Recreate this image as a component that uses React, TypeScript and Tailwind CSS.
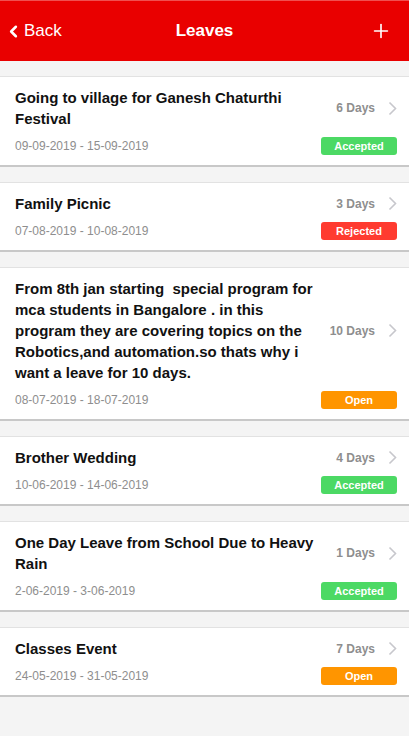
import { ChevronLeft, Plus } from 'lucide-react';

type Leave = {
  title: string;
  dates: string;
  days: string;
  status: 'Accepted' | 'Rejected' | 'Open';
};

const leaves: Leave[] = [
  { title: 'Going to village for Ganesh Chaturthi Festival', dates: '09-09-2019 - 15-09-2019', days: '6 Days', status: 'Accepted' },
  { title: 'Family Picnic', dates: '07-08-2019 - 10-08-2019', days: '3 Days', status: 'Rejected' },
  {
    title:
      'From 8th jan starting\u00a0 special program for mca students in Bangalore . in this program they are covering topics on the Robotics,and automation.so thats why i want a leave for 10 days.',
    dates: '08-07-2019 - 18-07-2019',
    days: '10 Days',
    status: 'Open',
  },
  { title: 'Brother Wedding', dates: '10-06-2019 - 14-06-2019', days: '4 Days', status: 'Accepted' },
  { title: 'One Day Leave from School Due to Heavy Rain', dates: '2-06-2019 - 3-06-2019', days: '1 Days', status: 'Accepted' },
  { title: 'Classes Event', dates: '24-05-2019 - 31-05-2019', days: '7 Days', status: 'Open' },
];

function StatusBadge({ status }: { status: Leave['status'] }) {
  const color =
    status === 'Accepted' ? 'bg-[#4cd964]' : status === 'Rejected' ? 'bg-[#ff3b30]' : 'bg-[#ff9500]';
  return (
    <span className={`${color} w-[76px] h-[18px] rounded-[3px] flex items-center justify-center text-white text-[11px] font-bold`}>
      {status}
    </span>
  );
}

function Chevron() {
  return (
    <svg width="9" height="15" viewBox="0 0 9 15" fill="none">
      <path d="M1.5 1.5 L7.5 7.5 L1.5 13.5" stroke="#c7c7cc" strokeWidth="1.6" />
    </svg>
  );
}

function LeaveCard({ leave }: { leave: Leave }) {
  return (
    <div className="bg-white border-t border-[#e2e2e2] border-b-2 border-b-[#c8c8c8] pl-[15px] pr-[12px] pt-[10px] pb-[10px]">
      <div className="flex items-center">
        <div className="w-[305px] text-[15px] leading-[21px] font-bold text-[#111]">{leave.title}</div>
        <div className="flex-1 flex items-center justify-end gap-[13px]">
          <span className="text-[12px] font-bold text-[#8e8e8e]">{leave.days}</span>
          <Chevron />
        </div>
      </div>
      <div className="flex items-center justify-between mt-[8px] h-[18px]">
        <span className="text-[12px] text-[#8e8e8e]">{leave.dates}</span>
        <StatusBadge status={leave.status} />
      </div>
    </div>
  );
}

export default function App() {
  return (
    <div className="min-h-[736px] bg-[#f4f4f4] font-['Liberation_Sans',Arial,sans-serif]">
      <div className="h-[61px] bg-[#e90000] border-t border-[#f05050] flex items-center justify-between px-[4px] text-white">
        <div className="flex items-center w-[80px]">
          <ChevronLeft size={19} strokeWidth={3.2} />
          <span className="text-[17px] ml-[1px]">Back</span>
        </div>
        <span className="text-[17px] font-bold">Leaves</span>
        <div className="w-[80px] flex justify-end pr-[13px]">
          <Plus size={22} strokeWidth={1.8} />
        </div>
      </div>
      <div className="flex flex-col gap-[15px] pt-[15px] pb-[20px]">
        {leaves.map((l, i) => (
          <LeaveCard key={i} leave={l} />
        ))}
      </div>
    </div>
  );
}
